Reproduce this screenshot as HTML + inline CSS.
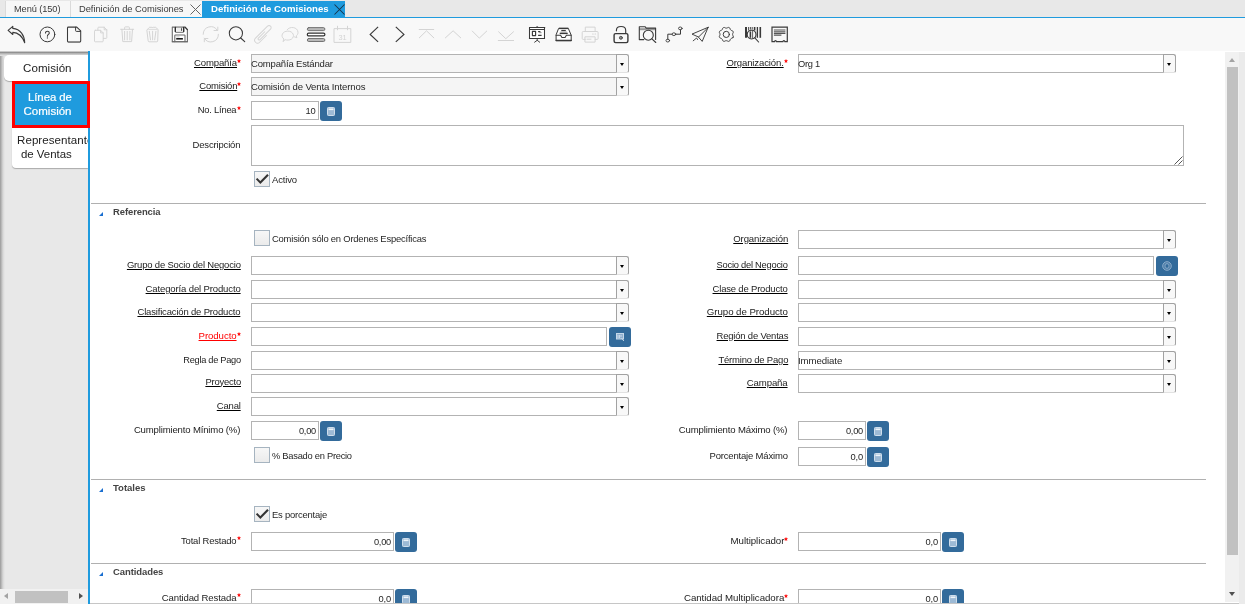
<!DOCTYPE html>
<html><head><meta charset="utf-8"><title>Definición de Comisiones</title>
<style>
html,body{margin:0;padding:0}
body{width:1245px;height:608px;overflow:hidden;position:relative;background:#fff;
 font-family:"Liberation Sans",sans-serif;font-size:10px;color:#333}
div,span{box-sizing:border-box}
#root{position:absolute;left:0;top:0;width:1245px;height:608px;overflow:hidden;will-change:transform}
.a{position:absolute}
.t{position:absolute;white-space:nowrap;line-height:12px;height:12px}
.t u{text-decoration:underline;text-decoration-thickness:1px;text-underline-offset:0.6px;text-decoration-color:#000}
.t.red u{text-decoration-color:#f00}
.tabbar{left:0;top:0;width:1245px;height:17px;background:#e8e8e8}
.tab{background:#f7f7f7;border-left:1px solid #dadada}
.inp{border:1px solid #b3b3b3;background:#fff}
.inp.ro{background:#f5f5f5}
.dd{border:1px solid #a2a2a2;background:#f8f8f8;border-radius:0 2.5px 2.5px 0;border-bottom-color:#e2e2e2}
.dd:after{content:"";position:absolute;left:2.7px;top:7.8px;width:0;height:0;border:2.6px solid transparent;border-top:3px solid #000;border-bottom:none}
.btn{background:#336b9b;border-radius:3px}
.sep{height:1px;background:#b0b0b0}
.tri{width:0;height:0;border-left:4.5px solid transparent;border-bottom:4.3px solid #1a6fd0}
.cb{width:16px;height:16px;border:1px solid #a6b4c0;background:linear-gradient(180deg,#f7f7f7,#ebebeb)}
</style></head>
<body>
<div id="root">
<div class="a tabbar" style="left:0px;top:0px;"></div>
<div class="a tab" style="left:5px;top:1px;width:65px;height:16px;"></div>
<div class="a tab" style="left:70px;top:1px;width:133px;height:16px;"></div>
<div class="a " style="left:202px;top:1px;width:143px;height:16px;background:#1f9bde"></div>
<div class="a " style="left:0px;top:17px;width:1245px;height:1px;background:#1f9bde"></div>
<div class="a " style="left:0px;top:18px;width:1245px;height:32.5px;background:#f8f8f8"></div>
<span class="t" style="top:2.75px;font-size:9.4px;color:#3a3a3a;letter-spacing:-0.085px;left:14.3px;transform-origin:0 50%;transform:scaleX(0.9852);">Menú (150)</span>
<span class="t" style="top:2.75px;font-size:9.4px;color:#3a3a3a;letter-spacing:-0.029px;left:79.3px;transform-origin:0 50%;transform:scaleX(0.9945);">Definición de Comisiones</span>
<span class="t" style="top:2.75px;font-size:9.6px;color:#fff;font-weight:700;letter-spacing:0.016px;left:211px;transform-origin:0 50%;">Definición de Comisiones</span>
<svg class="a" style="left:190px;top:3.5px" width="11" height="11" viewBox="0 0 11 11"><path d="M0.5 0.5 L10.5 10.5 M10.5 0.5 L0.5 10.5" stroke="#666" stroke-width="1.0" fill="none"/></svg>
<svg class="a" style="left:334px;top:3.5px" width="11" height="11" viewBox="0 0 11 11"><path d="M0.5 0.5 L10.5 10.5 M10.5 0.5 L0.5 10.5" stroke="#17344a" stroke-width="1.05" fill="none"/></svg>
<svg class="a" style="left:7px;top:24px;color:#3a3a3a" width="20" height="20" viewBox="0 0 20 20" fill="none" stroke="currentColor" stroke-width="1.1" stroke-linecap="round" stroke-linejoin="round"><path d="M5.8 2.3 L1.1 6.4 L5.8 10.5 V8.4 C10.5 8.6 15 11.5 17.7 18.8 C17.6 11.5 13.5 5 5.8 4.4 Z" stroke-width="1.1"/></svg>
<svg class="a" style="left:37px;top:24px;color:#3a3a3a" width="20" height="20" viewBox="0 0 20 20" fill="none" stroke="currentColor" stroke-width="1.1" stroke-linecap="round" stroke-linejoin="round"><circle cx="10.4" cy="10.4" r="7.4" stroke-width="1"/><path d="M8.5 8.9 C8.5 6.7 12.3 6.7 12.3 8.9 C12.3 10.4 10.4 10.5 10.4 12.2" stroke-width="1.05"/><circle cx="10.4" cy="13.9" r="0.65" fill="currentColor" stroke="none"/></svg>
<svg class="a" style="left:64px;top:24px;color:#3a3a3a" width="20" height="20" viewBox="0 0 20 20" fill="none" stroke="currentColor" stroke-width="1.1" stroke-linecap="round" stroke-linejoin="round"><path d="M4.4 3.1 H12.8 L16.7 6.8 V17 Q16.7 17.9 15.8 17.9 H4.4 Q3.5 17.9 3.5 17 V4 Q3.5 3.1 4.4 3.1 Z" stroke-width="1.05"/><path d="M11.6 3.2 V6.6 Q11.6 7.4 12.4 7.4 H16.6" stroke-width="1"/><path d="M4 18.2 H16.2" stroke-width="0.7" opacity="0.45"/></svg>
<svg class="a" style="left:90px;top:24px;color:#d4d4d4" width="20" height="20" viewBox="0 0 20 20" fill="none" stroke="currentColor" stroke-width="1.1" stroke-linecap="round" stroke-linejoin="round"><path d="M7.9 6 V4 Q7.9 3.2 8.7 3.2 H14.2 L16.8 5.8 V13.6 Q16.8 14.4 16 14.4 H13.4 M14.2 3.2 V5.8 H16.8" stroke-width="0.95"/><path d="M5.3 6.3 H10.6 L13.2 8.9 V17 Q13.2 17.8 12.4 17.8 H5.3 Q4.5 17.8 4.5 17 V7.1 Q4.5 6.3 5.3 6.3 Z M10.6 6.3 V8.9 H13.2" stroke-width="0.95"/></svg>
<svg class="a" style="left:117px;top:24px;color:#d4d4d4" width="20" height="20" viewBox="0 0 20 20" fill="none" stroke="currentColor" stroke-width="1.1" stroke-linecap="round" stroke-linejoin="round"><path d="M3.6 5.3 H16.7 M7.6 5.3 V3.6 Q7.6 2.9 8.3 2.9 H11.7 Q12.4 2.9 12.4 3.6 V5.3 M4.9 5.3 L5.8 17.6 H14.6 L15.5 5.3 M7.6 7.4 V15.9 M10.2 7.4 V15.9 M12.9 7.4 V15.9" stroke-width="1"/></svg>
<svg class="a" style="left:142px;top:24px;color:#d4d4d4" width="20" height="20" viewBox="0 0 20 20" fill="none" stroke="currentColor" stroke-width="1.1" stroke-linecap="round" stroke-linejoin="round"><path d="M5.1 5.8 L7 3.7 Q7.3 3.3 7.9 3.3 H9.9 Q10.5 3.3 10.6 3.9 Q10.7 3.3 11.3 3.3 H13.4 Q14 3.3 14.3 3.7 L16.1 5.8 L15.7 17 Q15.6 17.8 14.9 17.8 H7 Q6.3 17.8 6.2 17 Z" stroke-width="1"/><path d="M6.6 5.4 H14.8" stroke-width="0.8"/><path d="M7.3 7.3 L8.5 15.8 M10.6 7.3 V15.8 M13.9 7.3 L12.7 15.8" stroke-width="1"/></svg>
<svg class="a" style="left:169px;top:24px;color:#3a3a3a" width="20" height="20" viewBox="0 0 20 20" fill="none" stroke="currentColor" stroke-width="1.1" stroke-linecap="round" stroke-linejoin="round"><path d="M3.3 3.1 H16 L18.4 5.6 V17.7 H3.3 Z" fill="#fff" stroke="#6e6e6e" stroke-width="1.1" stroke-linejoin="round"/><path d="M16 3.1 L18.4 5.6" stroke="#333" stroke-width="1.1"/><path d="M3.3 17.8 H18.4" stroke="#666" stroke-width="1.1"/><path d="M6.3 3.3 V7.6 Q6.3 8.4 7.1 8.4 H13.9 Q14.7 8.4 14.7 7.6 V3.3" stroke="#8a8a8a" stroke-width="1.1"/><path d="M6.3 3.4 V7.4 M14.7 3.4 V7.4" stroke="#222" stroke-width="1.2"/><path d="M12.6 4.2 V6.8" stroke="#222" stroke-width="0.9" stroke-linecap="butt"/><rect x="7.6" y="3.8" width="4.4" height="3.4" fill="#eee" stroke="none"/><path d="M5.8 17.6 V11.6 Q5.8 10.9 6.5 10.9 H15.3 Q16 10.9 16 11.6 V17.6" stroke="#6a6a6a" stroke-width="1.05"/><path d="M7.3 12.9 H10.5" stroke="#bbb" stroke-width="0.8" stroke-linecap="butt"/><path d="M7.2 14.8 H13.9" stroke="#1a1a1a" stroke-width="1.6" stroke-linecap="butt"/></svg>
<svg class="a" style="left:201px;top:24px;color:#d4d4d4" width="20" height="20" viewBox="0 0 20 20" fill="none" stroke="currentColor" stroke-width="1.1" stroke-linecap="round" stroke-linejoin="round"><path d="M2.2 10.3 A7.6 7.6 0 0 1 16.35 6.44" stroke-width="1"/><path d="M16.8 3.1 V6.5 H13" stroke-width="1"/><path d="M17.4 10.3 A7.6 7.6 0 0 1 3.25 14.16" stroke-width="1"/><path d="M3.3 17.8 V14.5 H6.9" stroke-width="1"/></svg>
<svg class="a" style="left:227px;top:24px;color:#3a3a3a" width="20" height="20" viewBox="0 0 20 20" fill="none" stroke="currentColor" stroke-width="1.1" stroke-linecap="round" stroke-linejoin="round"><circle cx="8.9" cy="9.3" r="6.6" stroke-width="1.05"/><path d="M13.7 14 L17.7 17.6" stroke-width="1.15"/></svg>
<svg class="a" style="left:253px;top:24px;color:#d4d4d4" width="20" height="20" viewBox="0 0 20 20" fill="none" stroke="currentColor" stroke-width="1.1" stroke-linecap="round" stroke-linejoin="round"><g transform="translate(10.3 10.5) rotate(45)"><path d="M2.9 -1.5 V8.1 A2.9 2.9 0 0 1 -2.9 8.1 V-8.9 A2.1 2.1 0 0 1 1.3 -8.9 V6 A1.1 1.1 0 0 1 -0.9 6 V-3" stroke-width="0.95"/></g></svg>
<svg class="a" style="left:279px;top:24px;color:#d4d4d4" width="20" height="20" viewBox="0 0 20 20" fill="none" stroke="currentColor" stroke-width="1.1" stroke-linecap="round" stroke-linejoin="round"><path d="M4.1 17.3 L4.9 15 C1 12 3.6 7.1 8.8 7.1 C14.2 7.1 16.4 12.4 12.4 15.2 C10.4 16.3 7.8 16.3 6.5 15.8 Z" stroke-width="0.95"/><path d="M8.3 5.6 C10.4 2.2 18.8 2.6 19 8.4 C19 10.2 17.9 11.5 17.3 11.9 L17.9 13.7 L15.5 12.9" stroke-width="0.95"/></svg>
<svg class="a" style="left:306px;top:24px;color:#3a3a3a" width="20" height="20" viewBox="0 0 20 20" fill="none" stroke="currentColor" stroke-width="1.1" stroke-linecap="round" stroke-linejoin="round"><rect x="1.3" y="3.6" width="17.6" height="3" rx="1.5" fill="#b9b9b9" stroke="#6a6a6a" stroke-width="0.9"/><rect x="1.3" y="9.1" width="17.6" height="2.8" rx="1.4" fill="#fff" stroke="#333" stroke-width="1.2"/><rect x="1.3" y="14.5" width="17.6" height="3" rx="1.5" fill="#b9b9b9" stroke="#6a6a6a" stroke-width="0.9"/></svg>
<svg class="a" style="left:332px;top:24px;color:#d4d4d4" width="20" height="20" viewBox="0 0 20 20" fill="none" stroke="currentColor" stroke-width="1.1" stroke-linecap="round" stroke-linejoin="round"><path d="M2.4 4.6 H18.8 V18.4 H2.4 Z M5.5 2.2 V5.8 M15.5 2.2 V5.8" stroke-width="1"/><text x="10.6" y="16.2" font-size="7.4" text-anchor="middle" fill="currentColor" stroke="none" font-family="Liberation Sans, sans-serif">31</text></svg>
<svg class="a" style="left:364px;top:24px;color:#3a3a3a" width="20" height="20" viewBox="0 0 20 20" fill="none" stroke="currentColor" stroke-width="1.1" stroke-linecap="round" stroke-linejoin="round"><path d="M14.1 2.9 L6.2 10.4 L14.1 17.9" stroke-width="1.2" stroke-linecap="butt" stroke-linejoin="miter"/></svg>
<svg class="a" style="left:390px;top:24px;color:#3a3a3a" width="20" height="20" viewBox="0 0 20 20" fill="none" stroke="currentColor" stroke-width="1.1" stroke-linecap="round" stroke-linejoin="round"><path d="M5.8 2.9 L13.9 10.4 L5.8 17.9" stroke-width="1.2" stroke-linecap="butt" stroke-linejoin="miter"/></svg>
<svg class="a" style="left:416px;top:24px;color:#d4d4d4" width="20" height="20" viewBox="0 0 20 20" fill="none" stroke="currentColor" stroke-width="1.1" stroke-linecap="round" stroke-linejoin="round"><path d="M2.8 5.5 H18.1 M3 14.1 L10.5 6.8 L18.1 14.1" stroke-width="1" stroke-linecap="butt"/></svg>
<svg class="a" style="left:442px;top:24px;color:#d4d4d4" width="20" height="20" viewBox="0 0 20 20" fill="none" stroke="currentColor" stroke-width="1.1" stroke-linecap="round" stroke-linejoin="round"><path d="M3.1 14.1 L11.1 6.8 L19 14.1" stroke-width="1" stroke-linecap="butt"/></svg>
<svg class="a" style="left:469px;top:24px;color:#d4d4d4" width="20" height="20" viewBox="0 0 20 20" fill="none" stroke="currentColor" stroke-width="1.1" stroke-linecap="round" stroke-linejoin="round"><path d="M3 6.8 L10.3 14.1 L18 6.8" stroke-width="1" stroke-linecap="butt"/></svg>
<svg class="a" style="left:496px;top:24px;color:#d4d4d4" width="20" height="20" viewBox="0 0 20 20" fill="none" stroke="currentColor" stroke-width="1.1" stroke-linecap="round" stroke-linejoin="round"><path d="M1.9 16.5 H18 M2.3 7.5 L9.8 14.7 L17.8 7.5" stroke-width="1" stroke-linecap="butt"/></svg>
<svg class="a" style="left:527px;top:24px;color:#3a3a3a" width="20" height="20" viewBox="0 0 20 20" fill="none" stroke="currentColor" stroke-width="1.1" stroke-linecap="round" stroke-linejoin="round"><rect x="2.5" y="3.5" width="15" height="11" fill="#fff" stroke="none"/><path d="M2 3.5 H18.2 M2.5 5.5 H17.5" stroke-width="1" stroke-linecap="butt"/><path d="M2.5 3.5 V14.5 H17.5 V3.5" stroke-width="1.05"/><path d="M2.5 14.5 H17.5" stroke-width="1.2"/><path d="M9.3 2.9 H11.1" stroke-width="1" stroke-linecap="butt"/><path d="M10.2 14.6 V16.5 M7.6 18.2 L10.2 16.3 L12.7 18.2" stroke-width="0.95"/><rect x="5.4" y="7.4" width="3.2" height="4.2" stroke-width="1.15"/><path d="M11.1 7.7 H13.4 M11.1 11.4 H14.6" stroke-width="1.3" stroke-linecap="butt"/><path d="M12.4 8.7 H14.6" stroke-width="0.9" stroke-linecap="butt" opacity="0.6"/></svg>
<svg class="a" style="left:553px;top:24px;color:#3a3a3a" width="20" height="20" viewBox="0 0 20 20" fill="none" stroke="currentColor" stroke-width="1.1" stroke-linecap="round" stroke-linejoin="round"><path d="M6 4.4 H15.3 L18.2 11.2 V16.6 H3.1 V11.2 Z" fill="#fff" stroke-width="1"/><path d="M6 4.4 H15.3" stroke-width="1.4" stroke-linecap="butt"/><path d="M3.1 16.6 H18.2" stroke-width="1.5"/><path d="M3.1 11.2 H7.6 L8.9 13.4 H12.1 L13.4 11.2 H18.2" stroke-width="1.05"/><path d="M8.3 6.5 H12.8" stroke-width="1.2" stroke-linecap="butt"/><path d="M7.4 8 H13.8" stroke-width="1.2" stroke-linecap="butt" opacity="0.35"/><path d="M6.7 9.4 H14.7" stroke-width="1.4" stroke-linecap="butt"/></svg>
<svg class="a" style="left:580px;top:24px;color:#d4d4d4" width="20" height="20" viewBox="0 0 20 20" fill="none" stroke="currentColor" stroke-width="1.1" stroke-linecap="round" stroke-linejoin="round"><path d="M5.3 7.5 V3.1 H15.1 V7.5 M5.3 15.4 H3.2 Q2.2 15.4 2.2 14.4 V8.5 Q2.2 7.5 3.2 7.5 H17.1 Q18.1 7.5 18.1 8.5 V14.4 Q18.1 15.4 17.1 15.4 H15.1 M5.3 12.8 H15.1 V18.1 H5.3 Z M7 15.2 H11" stroke-width="1"/><path d="M12.6 10 H13.2 M15 10 H15.6" stroke-width="1.1"/></svg>
<svg class="a" style="left:610px;top:24px;color:#3a3a3a" width="20" height="20" viewBox="0 0 20 20" fill="none" stroke="currentColor" stroke-width="1.1" stroke-linecap="round" stroke-linejoin="round"><rect x="4.1" y="9.6" width="13.8" height="9" rx="1.5" stroke-width="1.4"/><path d="M6.4 6.8 V6.4 C6.4 1.2 15.7 1.2 15.7 6.4 V9.4" stroke-width="1.15"/><circle cx="10.9" cy="13.8" r="1.5" fill="#8a8a8a" stroke="#4a4a4a" stroke-width="0.9"/></svg>
<svg class="a" style="left:637px;top:24px;color:#3a3a3a" width="20" height="20" viewBox="0 0 20 20" fill="none" stroke="currentColor" stroke-width="1.1" stroke-linecap="round" stroke-linejoin="round"><path d="M6.8 15.6 H2.3 V2.7 H8 L9.2 4.1 H18.6 V15.4" stroke-width="1.1"/><path d="M2.3 5.2 H18.6" stroke-width="2" stroke-linecap="butt" opacity="0.5"/><circle cx="11.3" cy="11.2" r="5" fill="#f8f8f8" stroke-width="1.1"/><path d="M14.9 14.9 L18.8 18.5" stroke-width="1.1"/></svg>
<svg class="a" style="left:663px;top:24px;color:#3a3a3a" width="20" height="20" viewBox="0 0 20 20" fill="none" stroke="currentColor" stroke-width="1.1" stroke-linecap="round" stroke-linejoin="round"><ellipse cx="4.8" cy="16.6" rx="1.8" ry="1.4" stroke-width="0.9"/><ellipse cx="10.9" cy="10.2" rx="1.8" ry="1.4" stroke-width="0.9"/><ellipse cx="17.3" cy="4.4" rx="1.8" ry="1.4" stroke-width="0.9"/><path d="M4.8 15.2 V10.2 H9.1 M12.7 10.2 H17.5 V5.8" stroke-width="1" stroke-linejoin="miter"/></svg>
<svg class="a" style="left:690px;top:24px;color:#3a3a3a" width="20" height="20" viewBox="0 0 20 20" fill="none" stroke="currentColor" stroke-width="1.1" stroke-linecap="round" stroke-linejoin="round"><path d="M18.1 3.3 L2 10.1 L8.2 12.9 Z" stroke-width="0.95"/><path d="M18.1 3.3 L12.2 17.4 L8.2 12.9" stroke-width="0.95"/><path d="M3.2 16.8 L6.6 14 L7.6 15.6" stroke-width="0.9"/></svg>
<svg class="a" style="left:716px;top:24px;color:#3a3a3a" width="20" height="20" viewBox="0 0 20 20" fill="none" stroke="currentColor" stroke-width="1.1" stroke-linecap="round" stroke-linejoin="round"><circle cx="10.3" cy="10.4" r="3.1" stroke-width="1"/><path d="M17.09 13.21 L16.94 13.54 L16.73 13.84 L16.37 14.04 L15.97 14.19 L15.58 14.32 L15.22 14.44 L14.97 14.63 L14.75 14.85 L14.53 15.07 L14.34 15.32 L14.22 15.68 L14.09 16.07 L13.94 16.47 L13.74 16.83 L13.44 17.04 L13.11 17.19 L12.78 17.32 L12.42 17.38 L12.02 17.26 L11.63 17.09 L11.26 16.90 L10.92 16.73 L10.61 16.69 L10.30 16.70 L9.99 16.69 L9.68 16.73 L9.34 16.90 L8.97 17.09 L8.58 17.26 L8.18 17.38 L7.82 17.32 L7.49 17.19 L7.16 17.04 L6.86 16.83 L6.66 16.47 L6.51 16.07 L6.38 15.68 L6.26 15.32 L6.07 15.07 L5.85 14.85 L5.63 14.63 L5.38 14.44 L5.02 14.32 L4.63 14.19 L4.23 14.04 L3.87 13.84 L3.66 13.54 L3.51 13.21 L3.38 12.88 L3.32 12.52 L3.44 12.12 L3.61 11.73 L3.80 11.36 L3.97 11.02 L4.01 10.71 L4.00 10.40 L4.01 10.09 L3.97 9.78 L3.80 9.44 L3.61 9.07 L3.44 8.68 L3.32 8.28 L3.38 7.92 L3.51 7.59 L3.66 7.26 L3.87 6.96 L4.23 6.76 L4.63 6.61 L5.02 6.48 L5.38 6.36 L5.63 6.17 L5.85 5.95 L6.07 5.73 L6.26 5.48 L6.38 5.12 L6.51 4.73 L6.66 4.33 L6.86 3.97 L7.16 3.76 L7.49 3.61 L7.82 3.48 L8.18 3.42 L8.58 3.54 L8.97 3.71 L9.34 3.90 L9.68 4.07 L9.99 4.11 L10.30 4.10 L10.61 4.11 L10.92 4.07 L11.26 3.90 L11.63 3.71 L12.02 3.54 L12.42 3.42 L12.78 3.48 L13.11 3.61 L13.44 3.76 L13.74 3.97 L13.94 4.33 L14.09 4.73 L14.22 5.12 L14.34 5.48 L14.53 5.73 L14.75 5.95 L14.97 6.17 L15.22 6.36 L15.58 6.48 L15.97 6.61 L16.37 6.76 L16.73 6.96 L16.94 7.26 L17.09 7.59 L17.22 7.92 L17.28 8.28 L17.16 8.68 L16.99 9.07 L16.80 9.44 L16.63 9.78 L16.59 10.09 L16.60 10.40 L16.59 10.71 L16.63 11.02 L16.80 11.36 L16.99 11.73 L17.16 12.12 L17.28 12.52 L17.22 12.88 L17.09 13.21 Z" stroke-width="1"/></svg>
<svg class="a" style="left:743px;top:24px;color:#3a3a3a" width="20" height="20" viewBox="0 0 20 20" fill="none" stroke="currentColor" stroke-width="1.1" stroke-linecap="round" stroke-linejoin="round"><path d="M3 3 V13.8" stroke-width="2" stroke-linecap="butt"/><path d="M5.6 3 V6.5 M7.4 3 V5.6 M9.2 3 V5.6" stroke-width="0.9" stroke-linecap="butt"/><path d="M11.6 3 V6.6 M11.6 12 V13.8" stroke-width="1.6" stroke-linecap="butt"/><path d="M14.4 3 V13.8" stroke-width="1.3" stroke-linecap="butt"/><path d="M17.3 3 V13.8" stroke-width="1.6" stroke-linecap="butt"/><circle cx="8.6" cy="10.6" r="4.4" fill="#fbfbfb" stroke-width="1.15"/><path d="M7.4 7.4 V13.8" stroke-width="1.6" stroke-linecap="butt"/><path d="M9.6 6.9 V14.3" stroke-width="0.8" stroke-linecap="butt"/><path d="M11.8 13.8 L15.6 18" stroke-width="1.1"/></svg>
<svg class="a" style="left:769px;top:24px;color:#3a3a3a" width="20" height="20" viewBox="0 0 20 20" fill="none" stroke="currentColor" stroke-width="1.1" stroke-linecap="round" stroke-linejoin="round"><path d="M3 3.2 H18.3 V17.7 H15.9 Q15.8 16.6 14.9 16.6 Q14 16.6 13.9 17.7 H7.5 Q7.4 16.6 6.5 16.6 Q5.6 16.6 5.5 17.7 H3 Z" stroke-width="1.2" stroke-linejoin="miter"/><path d="M4.9 6 H16.4 M4.9 7.7 H16.4 M4.9 9.4 H16.4 M4.9 11.1 H12.4" stroke-width="1.15" stroke-linecap="butt" opacity="0.85"/></svg>
<div class="a " style="left:0px;top:51px;width:88px;height:540px;background:linear-gradient(90deg,#9a9a9a 0,#d8d8d8 3px,#e8e8e8 5px)"></div>
<div class="a " style="left:0px;top:50.5px;width:88px;height:5.5px;background:linear-gradient(180deg,#e8e8e8 0,#8e8e8e 28%,#bdbdbd 55%,#e6e6e6 100%)"></div>
<div class="a " style="left:4px;top:55px;width:84px;height:26px;background:#fff;border-radius:5px 0 0 5px;box-shadow:0 1px 1px #aaa"></div>
<div class="a " style="left:12px;top:128px;width:76px;height:40px;background:#fff;border-radius:0 0 0 4px;box-shadow:0 1px 1px #aaa"></div>
<span class="t" style="top:62.25px;font-size:11.5px;color:#222;letter-spacing:0.046px;left:23px;transform-origin:0 50%;transform:scaleX(1.0062);">Comisión</span>
<span class="t" style="top:134.25px;font-size:11.5px;color:#222;letter-spacing:0.044px;left:17.1px;transform-origin:0 50%;transform:scaleX(1.0062);">Representante</span>
<span class="t" style="top:148.25px;font-size:11.5px;color:#222;letter-spacing:-0.022px;left:21.4px;transform-origin:0 50%;transform:scaleX(0.9969);">de Ventas</span>
<div class="a " style="left:0px;top:589px;width:88px;height:15px;background:#f1f1f1"></div>
<div class="a " style="left:15px;top:591px;width:53px;height:11.5px;background:#c1c1c1"></div>
<div class="a" style="left:4.4px;top:593.3px;border:3.5px solid transparent;border-right:4.5px solid #a3a3a3;border-left:none"></div>
<div class="a" style="left:78.7px;top:593.3px;border:3.5px solid transparent;border-left:4.5px solid #505050;border-right:none"></div>
<div class="a " style="left:88px;top:51px;width:2px;height:554px;background:#1f9bde"></div>
<div class="a " style="left:12px;top:81px;width:78px;height:47px;background:#1f9bde;border:3px solid #f00"></div>
<div class="a " style="left:90px;top:128px;width:12px;height:40px;background:#fff"></div>
<span class="t" style="top:91.25px;font-size:11.5px;color:#fff;-webkit-text-stroke:0.2px #fff;letter-spacing:-0.066px;left:28.4px;transform-origin:0 50%;transform:scaleX(0.9902);">Línea de</span>
<span class="t" style="top:105.25px;font-size:11.5px;color:#fff;-webkit-text-stroke:0.2px #fff;letter-spacing:0.011px;left:23.5px;transform-origin:0 50%;">Comisión</span>
<div class="a " style="left:1225.3px;top:52px;width:14px;height:550px;background:#f1f1f1"></div>
<div class="a " style="left:1239.3px;top:52px;width:6px;height:552px;background:#ebebeb"></div>
<div class="a " style="left:1227.3px;top:67.4px;width:10.7px;height:487.8px;background:#c1c1c1"></div>
<div class="a" style="left:1229px;top:57.8px;border:3.6px solid transparent;border-bottom:4.2px solid #a3a3a3;border-top:none"></div>
<div class="a" style="left:1229px;top:592px;border:3.6px solid transparent;border-top:4.2px solid #505050;border-bottom:none"></div>
<span class="t" style="top:56.75px;font-size:9.8px;color:#222;letter-spacing:-0.151px;right:1008.15px;transform-origin:100% 50%;transform:scaleX(0.9775);"><u>Compañía</u></span>
<svg class="a" style="left:237.3px;top:58.9px" width="4" height="4" viewBox="0 0 44 44"><path d="M22 2 L27 15 L42 16 L31 26 L35 41 L22 33 L9 41 L13 26 L2 16 L17 15 Z" fill="#f00" stroke="#f00" stroke-width="2" stroke-linejoin="round"/></svg>
<div class="a inp ro" style="left:251px;top:54px;width:366px;height:19px;"></div>
<div class="a dd" style="left:616px;top:54px;width:13px;height:18.5px;"></div>
<span class="t" style="top:57.75px;font-size:9.8px;color:#262626;letter-spacing:-0.173px;left:250.7px;transform-origin:0 50%;transform:scaleX(0.9715);">Compañía Estándar</span>
<span class="t" style="top:56.75px;font-size:9.8px;color:#222;letter-spacing:-0.138px;right:461.13px;transform-origin:100% 50%;transform:scaleX(0.9750);"><u>Organización.</u></span>
<svg class="a" style="left:784.3px;top:58.9px" width="4" height="4" viewBox="0 0 44 44"><path d="M22 2 L27 15 L42 16 L31 26 L35 41 L22 33 L9 41 L13 26 L2 16 L17 15 Z" fill="#f00" stroke="#f00" stroke-width="2" stroke-linejoin="round"/></svg>
<div class="a inp" style="left:798px;top:54px;width:366px;height:19px;"></div>
<div class="a dd" style="left:1163px;top:54px;width:13px;height:18.5px;"></div>
<span class="t" style="top:57.75px;font-size:9.8px;color:#262626;letter-spacing:-0.288px;left:797.7px;transform-origin:0 50%;transform:scaleX(0.9490);">Org 1</span>
<span class="t" style="top:79.75px;font-size:9.8px;color:#222;letter-spacing:-0.202px;right:1008.20px;transform-origin:100% 50%;transform:scaleX(0.9662);"><u>Comisión</u></span>
<svg class="a" style="left:237.3px;top:81.9px" width="4" height="4" viewBox="0 0 44 44"><path d="M22 2 L27 15 L42 16 L31 26 L35 41 L22 33 L9 41 L13 26 L2 16 L17 15 Z" fill="#f00" stroke="#f00" stroke-width="2" stroke-linejoin="round"/></svg>
<div class="a inp ro" style="left:251px;top:77px;width:366px;height:19px;"></div>
<div class="a dd" style="left:616px;top:77px;width:13px;height:18.5px;"></div>
<span class="t" style="top:80.75px;font-size:9.8px;color:#262626;letter-spacing:-0.126px;left:250.7px;transform-origin:0 50%;transform:scaleX(0.9771);">Comisión de Venta Internos</span>
<span class="t" style="top:103.75px;font-size:9.8px;color:#222;letter-spacing:-0.237px;right:1008.23px;transform-origin:100% 50%;transform:scaleX(0.9567);">No. Línea</span>
<svg class="a" style="left:237.3px;top:105.8px" width="4" height="4" viewBox="0 0 44 44"><path d="M22 2 L27 15 L42 16 L31 26 L35 41 L22 33 L9 41 L13 26 L2 16 L17 15 Z" fill="#f00" stroke="#f00" stroke-width="2" stroke-linejoin="round"/></svg>
<div class="a inp" style="left:251px;top:101px;width:68px;height:19px;"></div>
<span class="t" style="top:104.75px;font-size:9.8px;color:#262626;letter-spacing:-0.277px;right:929.26px;transform-origin:100% 50%;transform:scaleX(0.9563);">10</span>
<div class="a btn" style="left:320px;top:101px;width:22px;height:20px;"><svg class="a" style="left:7px;top:6px" width="8" height="9" viewBox="0 0 8 9"><rect x="0.5" y="0.5" width="7" height="8" rx="0.8" fill="#9dbad5" stroke="#cfdeec" stroke-width="1"/><rect x="1.5" y="1.5" width="5" height="1.6" fill="#eef4f9"/></svg></div>
<span class="t" style="top:138.75px;font-size:9.8px;color:#222;letter-spacing:-0.169px;right:1004.86px;transform-origin:100% 50%;transform:scaleX(0.9691);">Descripción</span>
<div class="a inp" style="left:251px;top:125px;width:933px;height:41px;"></div>
<svg class="a" style="left:1174px;top:156px" width="9" height="9" viewBox="0 0 9 9"><path d="M8.5 0.5 L0.5 8.5 M8.5 4.5 L4.5 8.5" stroke="#555" stroke-width="1"/></svg>
<div class="a cb" style="left:254px;top:171px;width:16px;height:16px;"><svg class="a" style="left:0;top:0" width="14" height="14" viewBox="0 0 14 14"><path d="M1.6 6.6 L5.4 10.6 L13 2.8" stroke="#333" stroke-width="2.1" fill="none"/></svg></div>
<span class="t" style="top:173.75px;font-size:9.8px;color:#262626;letter-spacing:-0.155px;left:272.2px;transform-origin:0 50%;transform:scaleX(0.9705);">Activo</span>
<div class="a sep" style="left:91px;top:203px;width:1115px;"></div>
<div class="a tri" style="left:98.5px;top:211.7px;"></div>
<span class="t" style="top:205.75px;font-size:9.6px;color:#444;font-weight:700;letter-spacing:-0.086px;left:113.3px;transform-origin:0 50%;transform:scaleX(0.9854);">Referencia</span>
<div class="a cb" style="left:254px;top:230px;width:16px;height:16px;"></div>
<span class="t" style="top:232.75px;font-size:9.8px;color:#262626;letter-spacing:-0.215px;left:272.2px;transform-origin:0 50%;transform:scaleX(0.9606);">Comisión sólo en Ordenes Específicas</span>
<span class="t" style="top:232.75px;font-size:9.8px;color:#222;letter-spacing:-0.130px;right:457.13px;transform-origin:100% 50%;transform:scaleX(0.9773);"><u>Organización</u></span>
<div class="a inp" style="left:798px;top:230px;width:366px;height:19px;"></div>
<div class="a dd" style="left:1163px;top:230px;width:13px;height:18.5px;"></div>
<span class="t" style="top:258.75px;font-size:9.8px;color:#222;letter-spacing:-0.183px;right:1004.18px;transform-origin:100% 50%;transform:scaleX(0.9670);"><u>Grupo de Socio del Negocio</u></span>
<div class="a inp" style="left:251px;top:256px;width:366px;height:19px;"></div>
<div class="a dd" style="left:616px;top:256px;width:13px;height:18.5px;"></div>
<span class="t" style="top:258.75px;font-size:9.8px;color:#222;letter-spacing:-0.258px;right:457.25px;transform-origin:100% 50%;transform:scaleX(0.9519);"><u>Socio del Negocio</u></span>
<div class="a inp" style="left:798px;top:256px;width:356px;height:19px;"></div>
<div class="a btn" style="left:1156px;top:256px;width:22px;height:20px;"><svg class="a" style="left:6px;top:5px" width="10" height="10" viewBox="0 0 10 10"><circle cx="5" cy="5" r="4.2" fill="none" stroke="#a9c2da" stroke-width="0.9"/><rect x="3" y="2.8" width="4" height="4.4" rx="1" fill="none" stroke="#a9c2da" stroke-width="0.8"/></svg></div>
<span class="t" style="top:282.75px;font-size:9.8px;color:#222;letter-spacing:-0.144px;right:1004.14px;transform-origin:100% 50%;transform:scaleX(0.9734);"><u>Categoría del Producto</u></span>
<div class="a inp" style="left:251px;top:280px;width:366px;height:19px;"></div>
<div class="a dd" style="left:616px;top:280px;width:13px;height:18.5px;"></div>
<span class="t" style="top:282.75px;font-size:9.8px;color:#222;letter-spacing:-0.181px;right:457.18px;transform-origin:100% 50%;transform:scaleX(0.9674);"><u>Clase de Producto</u></span>
<div class="a inp" style="left:798px;top:280px;width:366px;height:19px;"></div>
<div class="a dd" style="left:1163px;top:280px;width:13px;height:18.5px;"></div>
<span class="t" style="top:305.75px;font-size:9.8px;color:#222;letter-spacing:-0.168px;right:1004.16px;transform-origin:100% 50%;transform:scaleX(0.9676);"><u>Clasificación de Producto</u></span>
<div class="a inp" style="left:251px;top:303px;width:366px;height:19px;"></div>
<div class="a dd" style="left:616px;top:303px;width:13px;height:18.5px;"></div>
<span class="t" style="top:305.75px;font-size:9.8px;color:#222;letter-spacing:-0.058px;right:457.06px;transform-origin:100% 50%;transform:scaleX(0.9902);"><u>Grupo de Producto</u></span>
<div class="a inp" style="left:798px;top:303px;width:366px;height:19px;"></div>
<div class="a dd" style="left:1163px;top:303px;width:13px;height:18.5px;"></div>
<span class="t red" style="top:329.75px;font-size:9.8px;color:#f00;letter-spacing:-0.084px;right:1008.08px;transform-origin:100% 50%;transform:scaleX(0.9858);"><u>Producto</u></span>
<svg class="a" style="left:237.3px;top:331.6px" width="4" height="4" viewBox="0 0 44 44"><path d="M22 2 L27 15 L42 16 L31 26 L35 41 L22 33 L9 41 L13 26 L2 16 L17 15 Z" fill="#f00" stroke="#f00" stroke-width="2" stroke-linejoin="round"/></svg>
<div class="a inp" style="left:251px;top:327px;width:356px;height:19px;"></div>
<div class="a btn" style="left:609px;top:327px;width:22px;height:20px;"><svg class="a" style="left:7px;top:6px" width="9" height="9" viewBox="0 0 9 9"><rect x="0.5" y="0.5" width="7" height="5.5" fill="#8fb0cf" stroke="#c5d8e9" stroke-width="1"/><path d="M2 2 V5 M3.5 2 V5 M5 2 V4" stroke="#dfeaf4" stroke-width="0.7"/><path d="M5.5 5 L7.8 8" stroke="#c5d8e9" stroke-width="1"/></svg></div>
<span class="t" style="top:329.75px;font-size:9.8px;color:#222;letter-spacing:-0.195px;right:457.19px;transform-origin:100% 50%;transform:scaleX(0.9657);"><u>Región de Ventas</u></span>
<div class="a inp" style="left:798px;top:327px;width:366px;height:19px;"></div>
<div class="a dd" style="left:1163px;top:327px;width:13px;height:18.5px;"></div>
<span class="t" style="top:353.75px;font-size:9.8px;color:#222;letter-spacing:-0.310px;right:1004.29px;transform-origin:100% 50%;transform:scaleX(0.9458);">Regla de Pago</span>
<div class="a inp" style="left:251px;top:351px;width:366px;height:19px;"></div>
<div class="a dd" style="left:616px;top:351px;width:13px;height:18.5px;"></div>
<span class="t" style="top:353.75px;font-size:9.8px;color:#222;letter-spacing:-0.196px;right:457.19px;transform-origin:100% 50%;transform:scaleX(0.9666);"><u>Término de Pago</u></span>
<div class="a inp" style="left:798px;top:351px;width:366px;height:19px;"></div>
<div class="a dd" style="left:1163px;top:351px;width:13px;height:18.5px;"></div>
<span class="t" style="top:354.75px;font-size:9.8px;color:#262626;letter-spacing:-0.095px;left:797.7px;transform-origin:0 50%;transform:scaleX(0.9845);">Immediate</span>
<span class="t" style="top:375.75px;font-size:9.8px;color:#222;letter-spacing:-0.211px;right:1004.20px;transform-origin:100% 50%;transform:scaleX(0.9626);"><u>Proyecto</u></span>
<div class="a inp" style="left:251px;top:374px;width:366px;height:19px;"></div>
<div class="a dd" style="left:616px;top:374px;width:13px;height:18.5px;"></div>
<span class="t" style="top:376.75px;font-size:9.8px;color:#222;letter-spacing:-0.132px;right:457.13px;transform-origin:100% 50%;transform:scaleX(0.9818);"><u>Campaña</u></span>
<div class="a inp" style="left:798px;top:374px;width:366px;height:19px;"></div>
<div class="a dd" style="left:1163px;top:374px;width:13px;height:18.5px;"></div>
<span class="t" style="top:399.75px;font-size:9.8px;color:#222;letter-spacing:-0.188px;right:1004.18px;transform-origin:100% 50%;transform:scaleX(0.9688);"><u>Canal</u></span>
<div class="a inp" style="left:251px;top:397px;width:366px;height:19px;"></div>
<div class="a dd" style="left:616px;top:397px;width:13px;height:18.5px;"></div>
<span class="t" style="top:423.75px;font-size:9.8px;color:#222;letter-spacing:-0.153px;right:1004.65px;transform-origin:100% 50%;transform:scaleX(0.9736);">Cumplimiento Mínimo (%)</span>
<div class="a inp" style="left:251px;top:421px;width:68px;height:19px;"></div>
<span class="t" style="top:424.75px;font-size:9.8px;color:#262626;letter-spacing:-0.313px;right:929.30px;transform-origin:100% 50%;transform:scaleX(0.9425);">0,00</span>
<div class="a btn" style="left:320px;top:421px;width:22px;height:20px;"><svg class="a" style="left:7px;top:6px" width="8" height="9" viewBox="0 0 8 9"><rect x="0.5" y="0.5" width="7" height="8" rx="0.8" fill="#9dbad5" stroke="#cfdeec" stroke-width="1"/><rect x="1.5" y="1.5" width="5" height="1.6" fill="#eef4f9"/></svg></div>
<span class="t" style="top:423.75px;font-size:9.8px;color:#222;letter-spacing:-0.152px;right:457.65px;transform-origin:100% 50%;transform:scaleX(0.9742);">Cumplimiento Máximo (%)</span>
<div class="a inp" style="left:798px;top:421px;width:68px;height:19px;"></div>
<span class="t" style="top:424.75px;font-size:9.8px;color:#262626;letter-spacing:-0.313px;right:382.30px;transform-origin:100% 50%;transform:scaleX(0.9425);">0,00</span>
<div class="a btn" style="left:867px;top:421px;width:22px;height:20px;"><svg class="a" style="left:7px;top:6px" width="8" height="9" viewBox="0 0 8 9"><rect x="0.5" y="0.5" width="7" height="8" rx="0.8" fill="#9dbad5" stroke="#cfdeec" stroke-width="1"/><rect x="1.5" y="1.5" width="5" height="1.6" fill="#eef4f9"/></svg></div>
<div class="a cb" style="left:254px;top:447px;width:16px;height:16px;"></div>
<span class="t" style="top:449.75px;font-size:9.8px;color:#262626;letter-spacing:-0.274px;left:272.2px;transform-origin:0 50%;transform:scaleX(0.9518);">% Basado en Precio</span>
<span class="t" style="top:449.75px;font-size:9.8px;color:#222;letter-spacing:-0.180px;right:457.17px;transform-origin:100% 50%;transform:scaleX(0.9690);">Porcentaje Máximo</span>
<div class="a inp" style="left:798px;top:447px;width:68px;height:19px;"></div>
<span class="t" style="top:450.75px;font-size:9.8px;color:#262626;letter-spacing:-0.243px;right:382.23px;transform-origin:100% 50%;transform:scaleX(0.9538);">0,0</span>
<div class="a btn" style="left:867px;top:447px;width:22px;height:20px;"><svg class="a" style="left:7px;top:6px" width="8" height="9" viewBox="0 0 8 9"><rect x="0.5" y="0.5" width="7" height="8" rx="0.8" fill="#9dbad5" stroke="#cfdeec" stroke-width="1"/><rect x="1.5" y="1.5" width="5" height="1.6" fill="#eef4f9"/></svg></div>
<div class="a sep" style="left:91px;top:479px;width:1115px;"></div>
<div class="a tri" style="left:98.5px;top:487.7px;"></div>
<span class="t" style="top:481.75px;font-size:9.6px;color:#444;font-weight:700;letter-spacing:-0.029px;left:113.3px;transform-origin:0 50%;transform:scaleX(0.9948);">Totales</span>
<div class="a cb" style="left:254px;top:506px;width:16px;height:16px;"><svg class="a" style="left:0;top:0" width="14" height="14" viewBox="0 0 14 14"><path d="M1.6 6.6 L5.4 10.6 L13 2.8" stroke="#333" stroke-width="2.1" fill="none"/></svg></div>
<span class="t" style="top:508.75px;font-size:9.8px;color:#262626;letter-spacing:-0.208px;left:272.2px;transform-origin:0 50%;transform:scaleX(0.9614);">Es porcentaje</span>
<span class="t" style="top:534.75px;font-size:9.8px;color:#222;letter-spacing:-0.195px;right:1008.19px;transform-origin:100% 50%;transform:scaleX(0.9639);">Total Restado</span>
<svg class="a" style="left:237.3px;top:536.4px" width="4" height="4" viewBox="0 0 44 44"><path d="M22 2 L27 15 L42 16 L31 26 L35 41 L22 33 L9 41 L13 26 L2 16 L17 15 Z" fill="#f00" stroke="#f00" stroke-width="2" stroke-linejoin="round"/></svg>
<div class="a inp" style="left:251px;top:532px;width:143px;height:19px;"></div>
<span class="t" style="top:535.75px;font-size:9.8px;color:#262626;letter-spacing:-0.313px;right:854.30px;transform-origin:100% 50%;transform:scaleX(0.9425);">0,00</span>
<div class="a btn" style="left:395px;top:532px;width:22px;height:20px;"><svg class="a" style="left:7px;top:6px" width="8" height="9" viewBox="0 0 8 9"><rect x="0.5" y="0.5" width="7" height="8" rx="0.8" fill="#9dbad5" stroke="#cfdeec" stroke-width="1"/><rect x="1.5" y="1.5" width="5" height="1.6" fill="#eef4f9"/></svg></div>
<span class="t" style="top:534.75px;font-size:9.8px;color:#222;letter-spacing:-0.047px;right:461.05px;transform-origin:100% 50%;transform:scaleX(0.9909);">Multiplicador</span>
<svg class="a" style="left:784.3px;top:536.6px" width="4" height="4" viewBox="0 0 44 44"><path d="M22 2 L27 15 L42 16 L31 26 L35 41 L22 33 L9 41 L13 26 L2 16 L17 15 Z" fill="#f00" stroke="#f00" stroke-width="2" stroke-linejoin="round"/></svg>
<div class="a inp" style="left:798px;top:532px;width:143px;height:19px;"></div>
<span class="t" style="top:535.75px;font-size:9.8px;color:#262626;letter-spacing:-0.243px;right:307.23px;transform-origin:100% 50%;transform:scaleX(0.9538);">0,0</span>
<div class="a btn" style="left:942px;top:532px;width:22px;height:20px;"><svg class="a" style="left:7px;top:6px" width="8" height="9" viewBox="0 0 8 9"><rect x="0.5" y="0.5" width="7" height="8" rx="0.8" fill="#9dbad5" stroke="#cfdeec" stroke-width="1"/><rect x="1.5" y="1.5" width="5" height="1.6" fill="#eef4f9"/></svg></div>
<div class="a sep" style="left:91px;top:563px;width:1115px;"></div>
<div class="a tri" style="left:98.5px;top:571.7px;"></div>
<span class="t" style="top:565.75px;font-size:9.6px;color:#444;font-weight:700;letter-spacing:-0.078px;left:113.3px;transform-origin:0 50%;transform:scaleX(0.9875);">Cantidades</span>
<span class="t" style="top:591.75px;font-size:9.8px;color:#222;letter-spacing:-0.128px;right:1008.13px;transform-origin:100% 50%;transform:scaleX(0.9780);">Cantidad Restada</span>
<svg class="a" style="left:237.3px;top:593.4px" width="4" height="4" viewBox="0 0 44 44"><path d="M22 2 L27 15 L42 16 L31 26 L35 41 L22 33 L9 41 L13 26 L2 16 L17 15 Z" fill="#f00" stroke="#f00" stroke-width="2" stroke-linejoin="round"/></svg>
<div class="a inp" style="left:251px;top:589px;width:143px;height:19px;"></div>
<span class="t" style="top:592.75px;font-size:9.8px;color:#262626;letter-spacing:-0.243px;right:854.23px;transform-origin:100% 50%;transform:scaleX(0.9538);">0,0</span>
<div class="a btn" style="left:395px;top:589px;width:22px;height:20px;"><svg class="a" style="left:7px;top:6px" width="8" height="9" viewBox="0 0 8 9"><rect x="0.5" y="0.5" width="7" height="8" rx="0.8" fill="#9dbad5" stroke="#cfdeec" stroke-width="1"/><rect x="1.5" y="1.5" width="5" height="1.6" fill="#eef4f9"/></svg></div>
<span class="t" style="top:591.75px;font-size:9.8px;color:#222;letter-spacing:-0.050px;right:461.05px;transform-origin:100% 50%;transform:scaleX(0.9907);">Cantidad Multiplicadora</span>
<svg class="a" style="left:784.3px;top:593.6px" width="4" height="4" viewBox="0 0 44 44"><path d="M22 2 L27 15 L42 16 L31 26 L35 41 L22 33 L9 41 L13 26 L2 16 L17 15 Z" fill="#f00" stroke="#f00" stroke-width="2" stroke-linejoin="round"/></svg>
<div class="a inp" style="left:798px;top:589px;width:143px;height:19px;"></div>
<span class="t" style="top:592.75px;font-size:9.8px;color:#262626;letter-spacing:-0.243px;right:307.23px;transform-origin:100% 50%;transform:scaleX(0.9538);">0,0</span>
<div class="a btn" style="left:942px;top:589px;width:22px;height:20px;"><svg class="a" style="left:7px;top:6px" width="8" height="9" viewBox="0 0 8 9"><rect x="0.5" y="0.5" width="7" height="8" rx="0.8" fill="#9dbad5" stroke="#cfdeec" stroke-width="1"/><rect x="1.5" y="1.5" width="5" height="1.6" fill="#eef4f9"/></svg></div>
<div class="a " style="left:0px;top:604px;width:1245px;height:4px;background:#fff"></div>
<div class="a " style="left:90px;top:603px;width:1149px;height:1px;background:#c6c6c6"></div>
</div>
</body></html>
